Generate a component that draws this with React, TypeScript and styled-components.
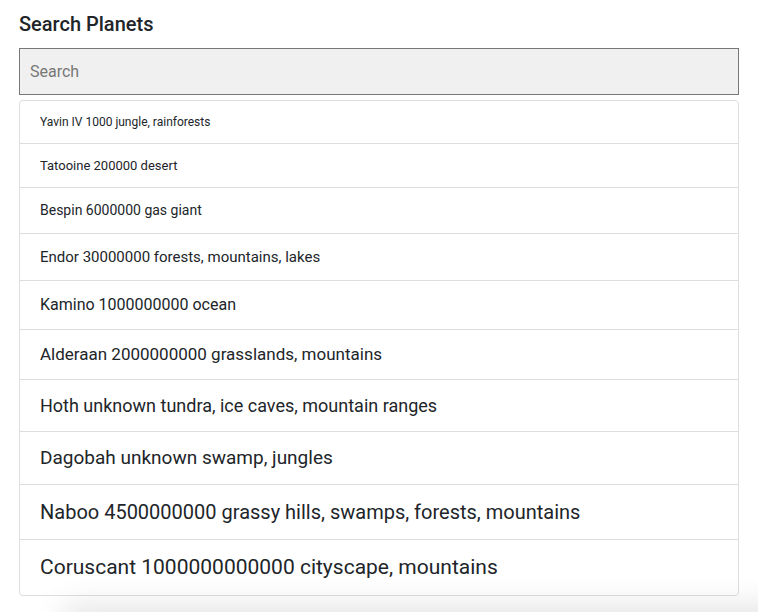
import React from "react";
import styled, { createGlobalStyle } from "styled-components";

const Global = createGlobalStyle`
  html, body { margin: 0; padding: 0; background: #fff; }
  body {
    font-family: Roboto, "Noto Sans", "Liberation Sans", sans-serif;
    color: #212529;
    overflow: hidden;
  }
  * { box-sizing: border-box; }
`;

const Page = styled.div`
  padding: 12px 19px 0 19px;
  width: 758px;
  height: 612px;
  overflow: hidden;
`;

const Title = styled.h5`
  margin: 0 0 12px 0;
  font-size: 20px;
  font-weight: 500;
  line-height: 24px;
  color: #212529;
`;

const SearchInput = styled.input`
  display: block;
  width: 720px;
  height: 47px;
  margin: 0;
  padding: 0 10px;
  border: 1px solid #777;
  border-radius: 0;
  background: #f0f0f0;
  font-family: inherit;
  font-size: 16px;
  color: #212529;
  outline: none;
  &::placeholder { color: #777; }
`;

const List = styled.ul`
  list-style: none;
  margin: 5px 0 0 0;
  padding: 0;
  width: 720px;
  border: 1px solid #dedede;
  border-radius: 4px;
  background: #fff;
`;

const Item = styled.li<{ $size: number }>`
  padding: 12px 20px;
  font-size: ${(p) => p.$size}px;
  line-height: ${(p) => Math.floor(p.$size * 1.5)}px;
  color: #212529;
  & + & { border-top: 1px solid #dedede; }
`;

const Shade = styled.div`
  margin: 16px 0 0 44px;
  height: 40px;
  width: 740px;
  background: #fff;
  box-shadow: 0 -8px 30px rgba(0, 0, 0, 0.1);
`;

const planets = [
  "Yavin IV 1000 jungle, rainforests",
  "Tatooine 200000 desert",
  "Bespin 6000000 gas giant",
  "Endor 30000000 forests, mountains, lakes",
  "Kamino 1000000000 ocean",
  "Alderaan 2000000000 grasslands, mountains",
  "Hoth unknown tundra, ice caves, mountain ranges",
  "Dagobah unknown swamp, jungles",
  "Naboo 4500000000 grassy hills, swamps, forests, mountains",
  "Coruscant 1000000000000 cityscape, mountains",
];

export default function App() {
  return (
    <>
      <Global />
      <Page>
        <Title>Search Planets</Title>
        <SearchInput placeholder="Search" />
        <List>
          {planets.map((p, i) => (
            <Item key={p} $size={12 + i}>
              {p}
            </Item>
          ))}
        </List>
        <Shade />
      </Page>
    </>
  );
}
